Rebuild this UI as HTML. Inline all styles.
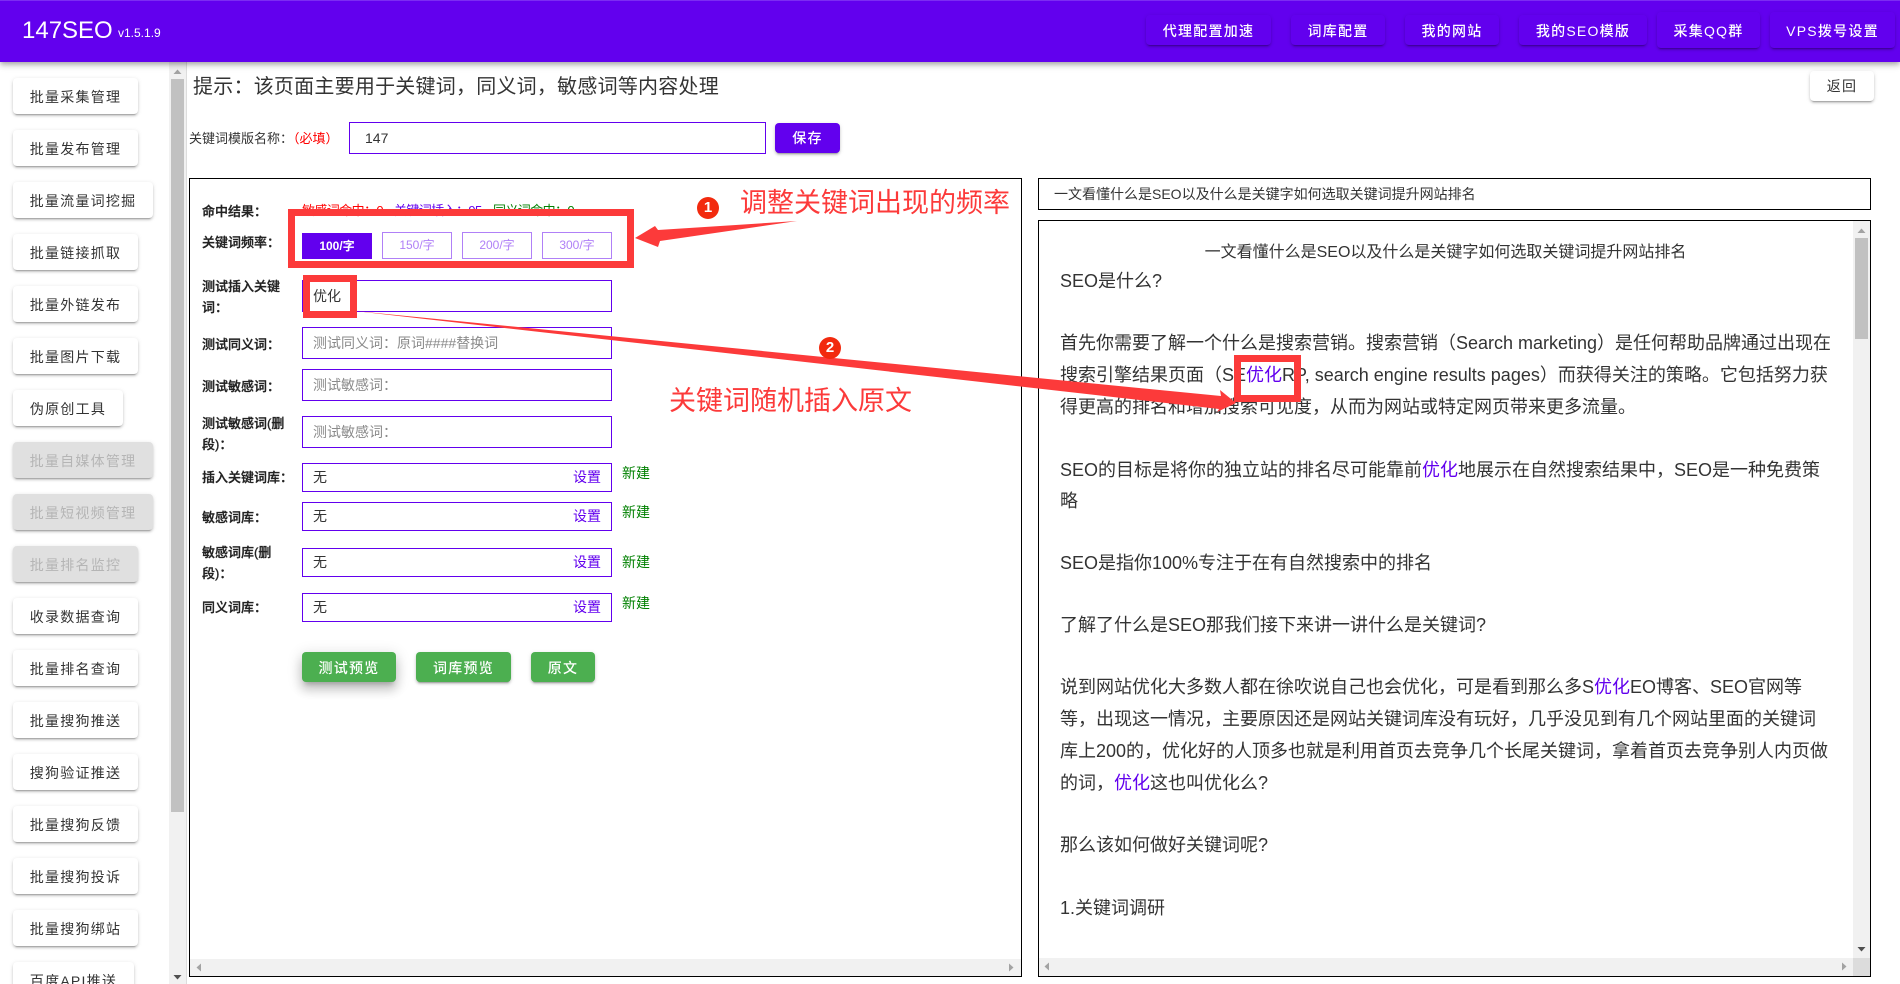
<!DOCTYPE html>
<html lang="zh-CN">
<head>
<meta charset="utf-8">
<title>147SEO</title>
<style>
*{box-sizing:border-box;margin:0;padding:0}
html,body{width:1900px;height:984px;overflow:hidden;background:#fff}
body{position:relative;font-family:"Liberation Sans","Noto Sans CJK SC",sans-serif;color:#333}
.a{position:absolute;white-space:nowrap}
#hdr{left:0;top:0;width:1900px;height:62px;background:#6200ee;border-top:1px solid #7c2cf2;box-shadow:0 2px 4px -1px rgba(0,0,0,.2),0 4px 5px 0 rgba(0,0,0,.14),0 1px 10px 0 rgba(0,0,0,.12);z-index:5}
.hb{position:absolute;color:#fff;font-size:14px;font-weight:500;letter-spacing:1.25px;text-align:center;border-radius:4px;box-shadow:0 3px 1px -2px rgba(0,0,0,.2),0 2px 2px 0 rgba(0,0,0,.14),0 1px 5px 0 rgba(0,0,0,.12)}
.sb{position:absolute;left:13px;height:36px;line-height:38px;background:#fff;color:#333;font-size:14px;letter-spacing:1.25px;text-align:center;border-radius:4px;white-space:nowrap;overflow:hidden;box-shadow:0 3px 1px -2px rgba(0,0,0,.2),0 2px 2px 0 rgba(0,0,0,.14),0 1px 5px 0 rgba(0,0,0,.12)}
.sb.d{background:#e0e0e0;color:#b5b5b5}
.box{position:absolute;border:1px solid #000;background:#fff}
.lb{position:absolute;left:202px;font-size:13px;font-weight:500;line-height:21px;color:#222;white-space:nowrap;-webkit-text-stroke:.3px #222;margin-top:1px}
.ip{position:absolute;left:302px;width:310px;height:32px;line-height:30px;border:1px solid #6200ee;background:#fff;font-size:14px;padding-left:10px;color:#333;white-space:nowrap}
.ip.ph{color:#8a8a8a}
.sl{position:absolute;left:302px;width:310px;height:29px;line-height:27px;border:1px solid #6200ee;background:#fff;font-size:14px;padding-left:10px;color:#333}
.sl span{position:absolute;left:270px;top:0;color:#6200ee}
.nw{position:absolute;left:622px;font-size:14px;color:green;line-height:20px;white-space:nowrap}
.fq{position:absolute;top:232px;width:70px;height:27px;line-height:25px;border:1px solid #b080f7;color:#b080f7;font-size:12px;text-align:center;background:#fff}
.gb{position:absolute;top:652px;height:30px;line-height:32px;background:#4caf50;color:#fff;font-size:14px;font-weight:500;letter-spacing:1.25px;text-align:center;border-radius:4px;box-shadow:0 3px 1px -2px rgba(0,0,0,.2),0 2px 2px 0 rgba(0,0,0,.14),0 1px 5px 0 rgba(0,0,0,.12)}
.l{position:absolute;left:1060px;height:32px;line-height:32px;font-size:18px;color:#333;white-space:nowrap}
.l b{font-weight:400;color:#6200ee}
.rr{position:absolute;border:7px solid #fc3a3a;z-index:10}
.ann{position:absolute;color:#fc3a3a;font-size:27px;line-height:36px;white-space:nowrap;z-index:10}
.c{position:absolute;width:22px;height:22px;border-radius:50%;background:#f22a0e;color:#fff;font-size:15px;font-weight:700;line-height:22px;text-align:center;z-index:10}
.track{position:absolute;background:#f1f1f1}
.th{position:absolute;background:#c1c1c1}
</style>
</head>
<body>

<div class="a" id="hdr">
  <div class="a" style="left:22px;top:12px;font-size:24px;line-height:36px;color:#fff">147SEO</div>
  <div class="a" style="left:118px;top:22px;font-size:12px;line-height:20px;color:#fff">v1.5.1.9</div>
  <div class="hb" style="left:1146px;top:14px;width:125px;height:30px;line-height:32px">代理配置加速</div>
  <div class="hb" style="left:1291px;top:14px;width:94px;height:30px;line-height:32px">词库配置</div>
  <div class="hb" style="left:1405px;top:14px;width:94px;height:30px;line-height:32px">我的网站</div>
  <div class="hb" style="left:1519px;top:14px;width:128px;height:30px;line-height:32px">我的SEO模版</div>
  <div class="hb" style="left:1657px;top:11px;width:103px;height:36px;line-height:38px">采集QQ群</div>
  <div class="hb" style="left:1770px;top:11px;width:125px;height:36px;line-height:38px">VPS拨号设置</div>
</div>

<!-- sidebar -->
<div class="sb" style="top:78px;width:125px">批量采集管理</div>
<div class="sb" style="top:130px;width:125px">批量发布管理</div>
<div class="sb" style="top:182px;width:140px">批量流量词挖掘</div>
<div class="sb" style="top:234px;width:125px">批量链接抓取</div>
<div class="sb" style="top:286px;width:125px">批量外链发布</div>
<div class="sb" style="top:338px;width:125px">批量图片下载</div>
<div class="sb" style="top:390px;width:110px">伪原创工具</div>
<div class="sb d" style="top:442px;width:140px">批量自媒体管理</div>
<div class="sb d" style="top:494px;width:140px">批量短视频管理</div>
<div class="sb d" style="top:546px;width:125px">批量排名监控</div>
<div class="sb" style="top:598px;width:125px">收录数据查询</div>
<div class="sb" style="top:650px;width:125px">批量排名查询</div>
<div class="sb" style="top:702px;width:125px">批量搜狗推送</div>
<div class="sb" style="top:754px;width:125px">搜狗验证推送</div>
<div class="sb" style="top:806px;width:125px">批量搜狗反馈</div>
<div class="sb" style="top:858px;width:125px">批量搜狗投诉</div>
<div class="sb" style="top:910px;width:125px">批量搜狗绑站</div>
<div class="sb" style="top:962px;width:121px">百度API推送</div>

<!-- sidebar scrollbar -->
<div class="track" style="left:169px;top:62px;width:17px;height:922px"></div>
<div class="a" style="left:186px;top:62px;width:1px;height:922px;background:#ddd"></div>
<div class="th" style="left:171px;top:79px;width:13px;height:733px"></div>
<svg class="a" style="left:169px;top:62px" width="17" height="17"><path d="M4.5 12 L8.5 7.5 L12.5 12 Z" fill="#a3a3a3"/></svg>
<svg class="a" style="left:169px;top:967px" width="17" height="17"><path d="M4.5 8 L8.5 12.5 L12.5 8 Z" fill="#505050"/></svg>

<!-- hint + back -->
<div class="a" style="left:193px;top:71px;font-size:20px;line-height:32px;letter-spacing:.23px;color:#333">提示：该页面主要用于关键词，同义词，敏感词等内容处理</div>
<div class="sb" style="left:1810px;top:71px;width:64px;height:30px;line-height:30px">返回</div>

<!-- template name -->
<div class="a" style="left:189px;top:129px;font-size:13px;line-height:20px;color:#333">关键词模版名称：<span style="color:#f00">（必填）</span></div>
<div class="ip" style="left:349px;top:122px;width:417px;padding-left:15px">147</div>
<div class="a" style="left:775px;top:123px;width:65px;height:30px;line-height:30px;background:#6200ee;color:#fff;font-size:14px;font-weight:500;letter-spacing:1.25px;text-align:center;border-radius:4px;box-shadow:0 3px 1px -2px rgba(0,0,0,.2),0 2px 2px 0 rgba(0,0,0,.14),0 1px 5px 0 rgba(0,0,0,.12)">保存</div>

<!-- left panel -->
<div class="box" style="left:189px;top:178px;width:833px;height:799px"></div>
<div class="track" style="left:190px;top:959px;width:831px;height:17px"></div>
<svg class="a" style="left:190px;top:959px" width="17" height="17"><path d="M11 4.5 L6.5 8.5 L11 12.5 Z" fill="#a3a3a3"/></svg>
<svg class="a" style="left:1003px;top:959px" width="17" height="17"><path d="M6 4.5 L10.5 8.5 L6 12.5 Z" fill="#a3a3a3"/></svg>

<div class="lb" style="top:200px">命中结果：</div>
<div class="a" style="left:302px;top:201px;font-size:13px;line-height:20px;letter-spacing:-.6px;color:#f00">敏感词命中：0</div>
<div class="a" style="left:394px;top:201px;font-size:13px;line-height:20px;letter-spacing:-.6px;color:#6200ee">关键词插入：95</div>
<div class="a" style="left:493px;top:201px;font-size:13px;line-height:20px;letter-spacing:-.6px;color:green">同义词命中：0</div>

<div class="lb" style="top:231px">关键词频率：</div>
<div class="fq" style="left:302px;top:233px;height:26px;line-height:26px;border:0;background:#6200ee;color:#fff;font-weight:700">100/字</div>
<div class="fq" style="left:382px">150/字</div>
<div class="fq" style="left:462px">200/字</div>
<div class="fq" style="left:542px">300/字</div>

<div class="lb" style="top:275px">测试插入关键<br>词：</div>
<div class="ip" style="top:280px">优化</div>
<div class="lb" style="top:333px">测试同义词：</div>
<div class="ip ph" style="top:327px">测试同义词：原词####替换词</div>
<div class="lb" style="top:375px">测试敏感词：</div>
<div class="ip ph" style="top:369px">测试敏感词：</div>
<div class="lb" style="top:412px">测试敏感词(删<br>段)：</div>
<div class="ip ph" style="top:416px">测试敏感词：</div>

<div class="lb" style="top:466px">插入关键词库：</div>
<div class="sl" style="top:463px">无<span>设置</span></div>
<div class="nw" style="top:463px">新建</div>
<div class="lb" style="top:506px">敏感词库：</div>
<div class="sl" style="top:502px">无<span>设置</span></div>
<div class="nw" style="top:502px">新建</div>
<div class="lb" style="top:541px">敏感词库(删<br>段)：</div>
<div class="sl" style="top:548px">无<span>设置</span></div>
<div class="nw" style="top:552px">新建</div>
<div class="lb" style="top:596px">同义词库：</div>
<div class="sl" style="top:593px">无<span>设置</span></div>
<div class="nw" style="top:593px">新建</div>

<div class="gb" style="left:302px;width:94px;box-shadow:0 5px 5px -3px rgba(0,0,0,.2),0 8px 10px 1px rgba(0,0,0,.14),0 3px 14px 2px rgba(0,0,0,.12)">测试预览</div>
<div class="gb" style="left:416px;width:95px">词库预览</div>
<div class="gb" style="left:531px;width:64px">原文</div>

<!-- right title -->
<div class="box" style="left:1038px;top:178px;width:833px;height:32px"></div>
<div class="a" style="left:1054px;top:184px;font-size:14px;line-height:20px;color:#333">一文看懂什么是SEO以及什么是关键字如何选取关键词提升网站排名</div>

<!-- right panel -->
<div class="box" style="left:1038px;top:220px;width:833px;height:757px"></div>
<div class="track" style="left:1853px;top:221px;width:17px;height:737px"></div>
<div class="th" style="left:1855px;top:238px;width:13px;height:101px"></div>
<svg class="a" style="left:1853px;top:221px" width="17" height="17"><path d="M4.5 12 L8.5 7.5 L12.5 12 Z" fill="#a3a3a3"/></svg>
<svg class="a" style="left:1853px;top:941px" width="17" height="17"><path d="M4.5 6 L8.5 10.5 L12.5 6 Z" fill="#505050"/></svg>
<div class="track" style="left:1039px;top:958px;width:814px;height:18px"></div>
<div class="a" style="left:1853px;top:958px;width:17px;height:18px;background:#dcdcdc"></div>
<svg class="a" style="left:1038px;top:958px" width="17" height="17"><path d="M11 4.5 L6.5 8.5 L11 12.5 Z" fill="#a3a3a3"/></svg>
<svg class="a" style="left:1836px;top:958px" width="17" height="17"><path d="M6 4.5 L10.5 8.5 L6 12.5 Z" fill="#a3a3a3"/></svg>

<div class="a" style="left:1038px;width:815px;top:242px;height:22px;line-height:22px;font-size:16px;text-align:center;color:#333">一文看懂什么是SEO以及什么是关键字如何选取关键词提升网站排名</div>
<div class="l" style="top:265px">SEO是什么?</div>
<div class="l" style="top:327px">首先你需要了解一个什么是搜索营销。搜索营销（Search marketing）是任何帮助品牌通过出现在</div>
<div class="l" style="top:359px">搜索引擎结果页面（SE<b>优化</b>RP, search engine results pages）而获得关注的策略。它包括努力获</div>
<div class="l" style="top:391px">得更高的排名和增加搜索可见度，从而为网站或特定网页带来更多流量。</div>
<div class="l" style="top:454px">SEO的目标是将你的独立站的排名尽可能靠前<b>优化</b>地展示在自然搜索结果中，SEO是一种免费策</div>
<div class="l" style="top:485px">略</div>
<div class="l" style="top:547px">SEO是指你100%专注于在有自然搜索中的排名</div>
<div class="l" style="top:609px">了解了什么是SEO那我们接下来讲一讲什么是关键词?</div>
<div class="l" style="top:671px">说到网站优化大多数人都在徐吹说自己也会优化，可是看到那么多S<b>优化</b>EO博客、SEO官网等</div>
<div class="l" style="top:703px">等，出现这一情况，主要原因还是网站关键词库没有玩好，几乎没见到有几个网站里面的关键词</div>
<div class="l" style="top:735px">库上200的，优化好的人顶多也就是利用首页去竞争几个长尾关键词，拿着首页去竞争别人内页做</div>
<div class="l" style="top:767px">的词，<b>优化</b>这也叫优化么?</div>
<div class="l" style="top:829px">那么该如何做好关键词呢?</div>
<div class="l" style="top:892px">1.关键词调研</div>

<!-- annotations -->
<div class="rr" style="left:288px;top:209px;width:346px;height:59px"></div>
<div class="rr" style="left:303px;top:275px;width:54px;height:43px"></div>
<div class="rr" style="left:1234px;top:355px;width:67px;height:47px"></div>
<svg class="a" style="left:0;top:0;z-index:10" width="1900" height="984">
  <polygon points="635,238 655,226 658,230 797,221 660,241 658,247" fill="#fc3a3a"/>
  <polygon points="355,311 1221,396 1220,390 1236,403 1217,412 1219,409" fill="#fc3a3a"/>
</svg>
<div class="c" style="left:697px;top:197px">1</div>
<div class="c" style="left:819px;top:337px">2</div>
<div class="ann" style="left:740px;top:185px">调整关键词出现的频率</div>
<div class="ann" style="left:669px;top:383px">关键词随机插入原文</div>

</body>
</html>
